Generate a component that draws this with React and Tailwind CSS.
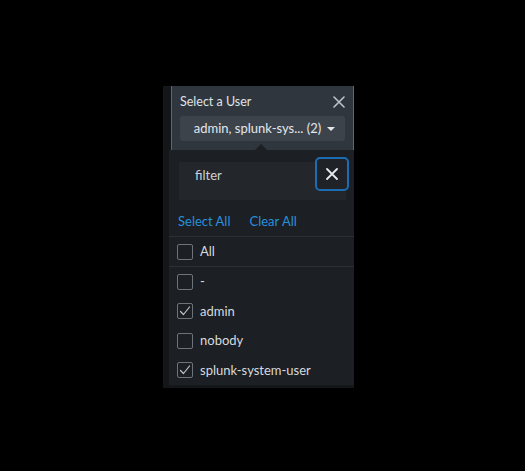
import React from "react";

const font = { fontFamily: "Lato, 'Open Sans', sans-serif" };

const users = [
  { name: "-", checked: false },
  { name: "admin", checked: true },
  { name: "nobody", checked: false },
  { name: "splunk-system-user", checked: true },
];

const Checkbox = ({ checked }) => (
  <span className="flex h-[16px] w-[16px] shrink-0 items-center justify-center rounded-[2px] border-[1.5px] border-[#6c737b]">
    {checked && (
      <svg width="14" height="14" viewBox="0 0 14 14" fill="none">
        <polyline
          points="2.5,7.5 5.5,10.5 11.5,3"
          stroke="#c3c8cd"
          strokeWidth="1.2"
          strokeLinecap="round"
          strokeLinejoin="round"
        />
      </svg>
    )}
  </span>
);

const Row = ({ name, checked, className }) => (
  <div className={`flex items-center gap-[7px] pl-[8px] ${className}`}>
    <Checkbox checked={checked} />
    <span className="text-[13px] text-[#d6dadf]">{name}</span>
  </div>
);

const CloseIcon = ({ size, color, width }) => (
  <svg width={size} height={size} viewBox="0 0 12 12" fill="none">
    <path d="M1 1L11 11M11 1L1 11" stroke={color} strokeWidth={width} strokeLinecap="round" />
  </svg>
);

export default function App() {
  return (
    <div className="min-h-[471px] bg-black pl-[163px] pt-[86px]" style={font}>
      <div className="flex w-fit flex-col bg-[#14171a] pb-[3px] pl-[8px]">
        <div className="w-[183px] border-x border-[#1d78c9] bg-[#30363d] px-[8px] pb-[9px] pt-[8px]">
          <div className="flex h-[16px] items-center justify-between">
            <span className="text-[12.5px] text-[#dfe3e8]">Select a User</span>
            <CloseIcon size={12} color="#bcc3ca" width={1.6} />
          </div>
          <div className="mt-[6px] flex h-[25px] items-center justify-center gap-[6px] rounded-[3px] bg-[#3c434b] pl-[4px]">
            <span className="text-[13px] text-[#e3e7eb]">admin, splunk-sys... (2)</span>
            <span className="mt-[1px] h-0 w-0 border-x-[4px] border-t-[4px] border-x-transparent border-t-[#e3e7eb]" />
          </div>
        </div>
        <div className="relative -ml-[2px] w-[185px] bg-[#1c1f23]">
          <span className="absolute -top-[6px] left-[86px] h-0 w-0 border-x-[6px] border-b-[6px] border-x-transparent border-b-[#1c1f23]" />
          <div className="ml-[10px] mr-[8px] mt-[12px] h-[38px] bg-[#23272b]">
            <div className="flex h-[28px] items-center justify-between">
              <span className="pl-[16px] text-[13px] text-[#cdd1d5]">filter</span>
              <span className="-mr-[3px] -mt-[4px] flex h-[34px] w-[34px] items-center justify-center rounded-[5px] border-2 border-[#1b6cb0] bg-[#1f2327]">
                <CloseIcon size={12} color="#e6e9ec" width={1.8} />
              </span>
            </div>
          </div>
          <div className="flex h-[36px] gap-[19px] pl-[9px] pt-[13px] text-[13px] leading-[16px] text-[#2890dc]">
            <span>Select All</span>
            <span>Clear All</span>
          </div>
          <div className="border-t border-[#2b3035]">
            <Row name="All" checked={false} className="h-[29px]" />
          </div>
          <div className="border-t border-[#2b3035]">
            {users.map((u) => (
              <Row key={u.name} name={u.name} checked={u.checked} className="h-[29.5px]" />
            ))}
          </div>
        </div>
      </div>
    </div>
  );
}
